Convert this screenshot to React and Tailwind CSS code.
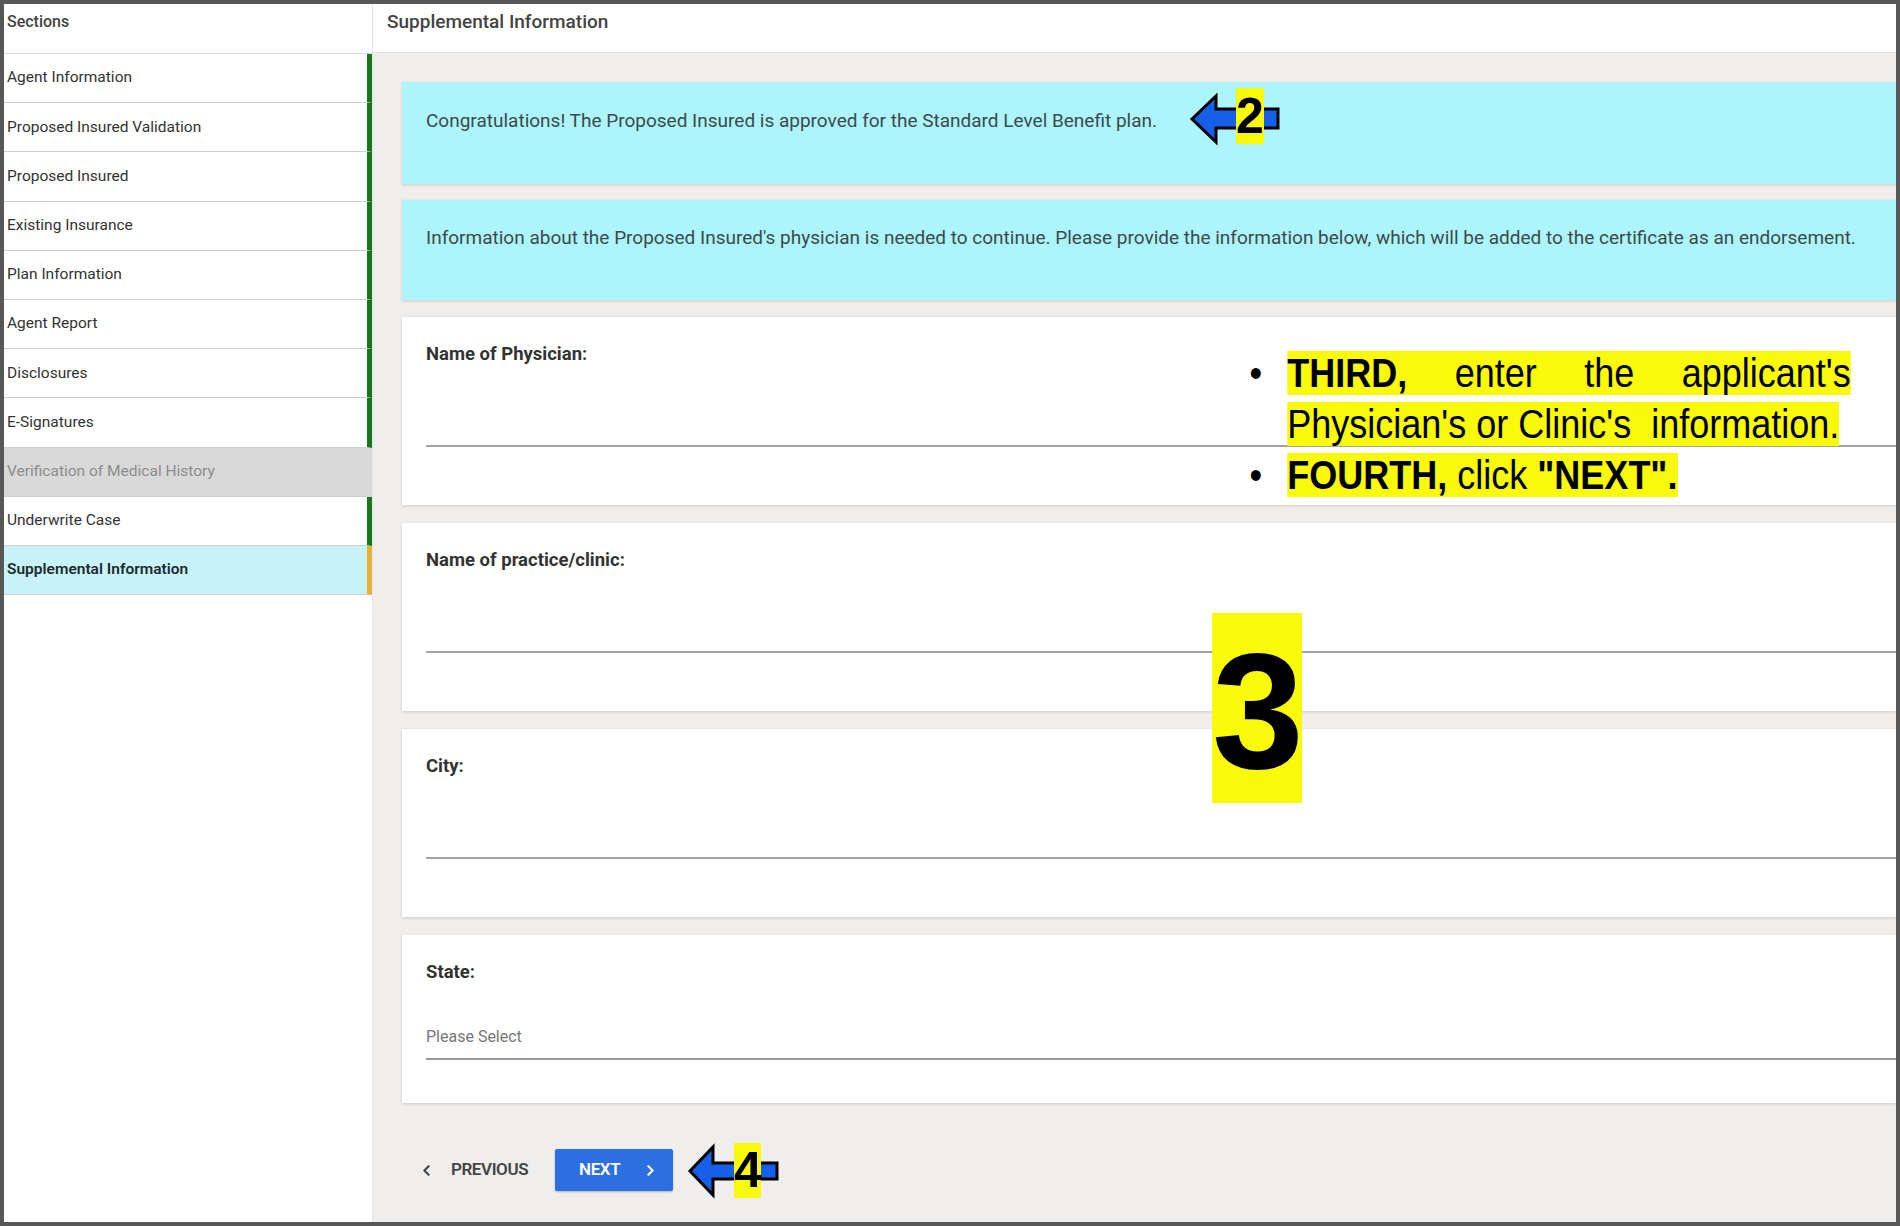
import React from 'react'
import { ChevronLeft, ChevronRight } from 'lucide-react'

const sections = [
  { label: 'Agent Information', state: 'done' },
  { label: 'Proposed Insured Validation', state: 'done' },
  { label: 'Proposed Insured', state: 'done' },
  { label: 'Existing Insurance', state: 'done' },
  { label: 'Plan Information', state: 'done' },
  { label: 'Agent Report', state: 'done' },
  { label: 'Disclosures', state: 'done' },
  { label: 'E-Signatures', state: 'done' },
  { label: 'Verification of Medical History', state: 'disabled' },
  { label: 'Underwrite Case', state: 'done' },
  { label: 'Supplemental Information', state: 'active' },
]

const itemClass = {
  done: 'bg-white text-[#333] border-r-[5px] border-r-[#187818]',
  disabled: 'bg-[#d9d9d9] text-[#8c8c8c] border-r-[5px] border-r-[#d9d9d9]',
  active: 'bg-[#c8f3f8] text-[#1f2a30] font-semibold border-r-[5px] border-r-[#e6b23a]',
}

// blue callout arrow pointing left, shaft runs under the number box
const CalloutArrow = ({ width, height, head, shaftTop, shaftBottom }) => (
  <svg width={width} height={height} viewBox={`0 0 ${width} ${height}`} className="block overflow-visible">
    <path
      d={`M2 ${height / 2} L${head} 2 L${head} ${shaftTop} L${width - 2} ${shaftTop} L${width - 2} ${shaftBottom} L${head} ${shaftBottom} L${head} ${height - 2} Z`}
      fill="#1660e8"
      stroke="#000"
      strokeWidth="3"
      strokeLinejoin="miter"
    />
  </svg>
)

const FieldCard = ({ label, children, tall = true }) => (
  <div className={`bg-white shadow-[0_1px_3px_rgba(0,0,0,0.14)] pl-[24px] pt-[27px] ${tall ? 'h-[188px]' : 'h-[168px]'}`}>
    <div className="text-[18.5px] leading-[20px] font-bold text-[#333]">{label}</div>
    {children}
  </div>
)

const App = () => {
  return (
    <div className="relative w-[1900px] h-[1226px] border-4 border-[#575757] bg-white flex overflow-hidden font-['Roboto',sans-serif]">
      {/* Sidebar */}
      <div className="w-[369px] shrink-0 flex flex-col bg-white border-r border-[#e6e6e6]">
        <div className="h-[50px] shrink-0 border-b border-[#dcdcdc] pl-[3px] pt-[8px] text-[16px] leading-[20px] font-medium text-[#444]">
          Sections
        </div>
        {sections.map((s, i) => (
          <div
            key={i}
            className={`h-[49.2px] shrink-0 flex items-center pl-[3px] text-[15.5px] border-b border-b-[#cfcfcf] ${itemClass[s.state]}`}
          >
            {s.label}
          </div>
        ))}
        <div className="flex-1 bg-white" />
      </div>

      {/* Main */}
      <div className="flex-1 flex flex-col bg-[#efeeed] min-w-0">
        <div className="h-[49px] shrink-0 bg-white border-b border-[#e2e2e2] pl-[14px] pt-[7px] text-[19px] leading-[22px] font-medium text-[#444]">
          Supplemental Information
        </div>
        <div className="flex flex-col pl-[29px] pt-[29px]">
          <div className="h-[102px] bg-[#aef5fb] shadow-[0_1px_3px_rgba(0,0,0,0.14)] pl-[24px] pt-[28px] text-[19px] leading-[22px] text-[#3a4a4d]">
            Congratulations! The Proposed Insured is approved for the Standard Level Benefit plan.
          </div>
          <div className="h-[100px] mt-[16px] bg-[#aef5fb] shadow-[0_1px_3px_rgba(0,0,0,0.14)] pl-[24px] pt-[27px] text-[19px] leading-[22px] text-[#3a4a4d] whitespace-nowrap">
            Information about the Proposed Insured's physician is needed to continue. Please provide the information below, which will be added to the certificate as an endorsement.
          </div>

          <div className="mt-[17px] flex flex-col gap-[18px]">
            <FieldCard label="Name of Physician:">
              <div className="h-[83px] border-b-2 border-[#a3a3a3]" />
            </FieldCard>
            <FieldCard label="Name of practice/clinic:">
              <div className="h-[83px] border-b-2 border-[#a3a3a3]" />
            </FieldCard>
            <FieldCard label="City:">
              <div className="h-[83px] border-b-2 border-[#a3a3a3]" />
            </FieldCard>
            <FieldCard label="State:" tall={false}>
              <div className="h-[78px] border-b-2 border-[#9a9a9a] flex items-end pb-[9px] text-[16px] text-[#777]">
                Please Select
              </div>
            </FieldCard>
          </div>

          <div className="flex items-center mt-[46px] pl-[16px]">
            <button className="flex items-center gap-[16px] text-[17px] font-semibold tracking-tight text-[#444] uppercase">
              <ChevronLeft size={17} strokeWidth={3} />
              Previous
            </button>
            <button className="ml-[27px] w-[118px] h-[42px] rounded-[2px] bg-[#2d6fe0] shadow-[0_1px_2px_rgba(0,0,0,0.25)] flex items-center pl-[24px] gap-[22px] text-[17px] font-semibold tracking-tight text-white uppercase">
              Next
              <ChevronRight size={17} strokeWidth={3} />
            </button>
          </div>
        </div>
      </div>

      {/* Tutorial callouts */}
      <div className="absolute left-[1186px] top-[90px]">
        <CalloutArrow width={90} height={50} head={26} shaftTop={15} shaftBottom={34} />
      </div>
      <div className="absolute left-[1232px] top-[84px] w-[28px] h-[56px] bg-[#f9f90b] text-center font-['Liberation_Sans',Arial,sans-serif] font-bold text-[50px] leading-[56px] text-black">
        2
      </div>

      <div className="absolute left-[1208px] top-[609px] w-[90px] h-[190px] bg-[#f9f90b] pt-[6px] text-center font-['Liberation_Sans',Arial,sans-serif] font-bold text-[165px] leading-[184px] text-black">
        3
      </div>

      <div className="absolute left-[684px] top-[1141px]">
        <CalloutArrow width={91} height={52} head={25} shaftTop={18} shaftBottom={34} />
      </div>
      <div className="absolute left-[730px] top-[1139px] w-[27px] h-[55px] bg-[#f9f90b] text-center font-['Liberation_Sans',Arial,sans-serif] font-bold text-[50px] leading-[55px] text-black">
        4
      </div>

      <div className="absolute left-[1241px] top-[344px] origin-top-left scale-x-[0.9] font-['Liberation_Sans',Arial,sans-serif] text-[40px] leading-[51px] text-black">
        <div className="flex">
          <span className="w-[47px] shrink-0 pl-[5px]">•</span>
          <p className="w-[626px] text-justify">
            <span className="bg-[#f9f90b]">
              <b>THIRD,</b> enter the applicant's Physician's or Clinic's&nbsp; information.
            </span>
          </p>
        </div>
        <div className="flex">
          <span className="w-[47px] shrink-0 pl-[5px]">•</span>
          <p className="w-[626px]">
            <span className="bg-[#f9f90b]">
              <b>FOURTH,</b> click <b>"NEXT".</b>
            </span>
          </p>
        </div>
      </div>
    </div>
  )
}

export default App
